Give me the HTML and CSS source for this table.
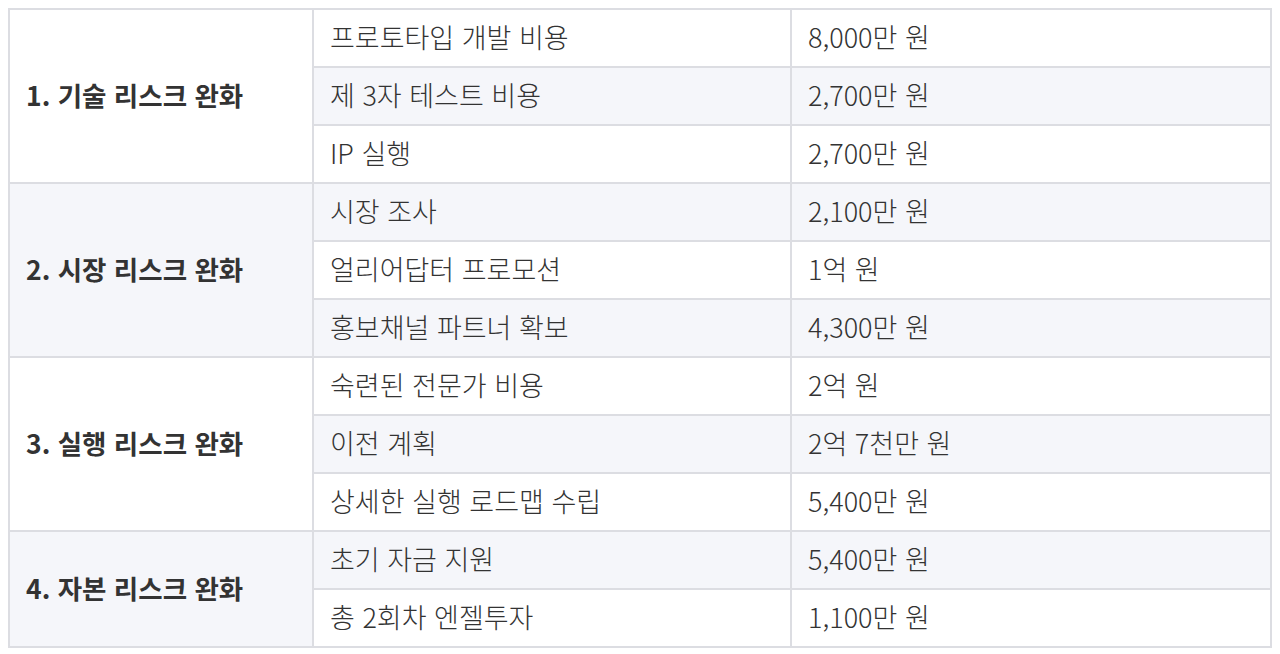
FILE: index.html
```html
<!DOCTYPE html>
<html lang="ko">
<head>
<meta charset="utf-8">
<link rel="stylesheet" href="styles.css">
</head>
<body>
<table class="cost-table">
  <colgroup>
    <col class="c1"><col class="c2"><col class="c3">
  </colgroup>
  <tbody>
    <tr><td class="group" rowspan="3">1. 기술 리스크 완화</td><td>프로토타입 개발 비용</td><td>8,000만 원</td></tr>
    <tr><td>제 3자 테스트 비용</td><td>2,700만 원</td></tr>
    <tr><td>IP 실행</td><td>2,700만 원</td></tr>
    <tr><td class="group" rowspan="3">2. 시장 리스크 완화</td><td>시장 조사</td><td>2,100만 원</td></tr>
    <tr><td>얼리어답터 프로모션</td><td>1억 원</td></tr>
    <tr><td>홍보채널 파트너 확보</td><td>4,300만 원</td></tr>
    <tr><td class="group" rowspan="3">3. 실행 리스크 완화</td><td>숙련된 전문가 비용</td><td>2억 원</td></tr>
    <tr><td>이전 계획</td><td>2억 7천만 원</td></tr>
    <tr><td>상세한 실행 로드맵 수립</td><td>5,400만 원</td></tr>
    <tr><td class="group" rowspan="2">4. 자본 리스크 완화</td><td>초기 자금 지원</td><td>5,400만 원</td></tr>
    <tr><td>총 2회차 엔젤투자</td><td>1,100만 원</td></tr>
  </tbody>
</table>
</body>
</html>
```

FILE: styles.css
```css
html, body {
  margin: 0;
  padding: 0;
  background: #ffffff;
}
body {
  padding: 8px;
  font-family: "Noto Sans CJK KR", "Noto Sans", sans-serif;
  color: #333333;
}
.cost-table {
  width: 1262px;
  border-collapse: collapse;
  table-layout: fixed;
  border: 2px solid #dcdde2;
}
.c1 { width: 304px; }
.c2 { width: 478px; }
.c3 { width: 480px; }
.cost-table td {
  border: 2px solid #dcdde2;
  height: 58px;
  padding: 0 16px 3px;
  box-sizing: border-box;
  font-size: 27px;
  font-weight: 300;
  line-height: 34px;
  vertical-align: middle;
}
.cost-table tr:nth-child(even) td {
  background: #f5f6fa;
}
.cost-table td.group {
  font-weight: 600;
  font-size: 26.5px;
}
```
